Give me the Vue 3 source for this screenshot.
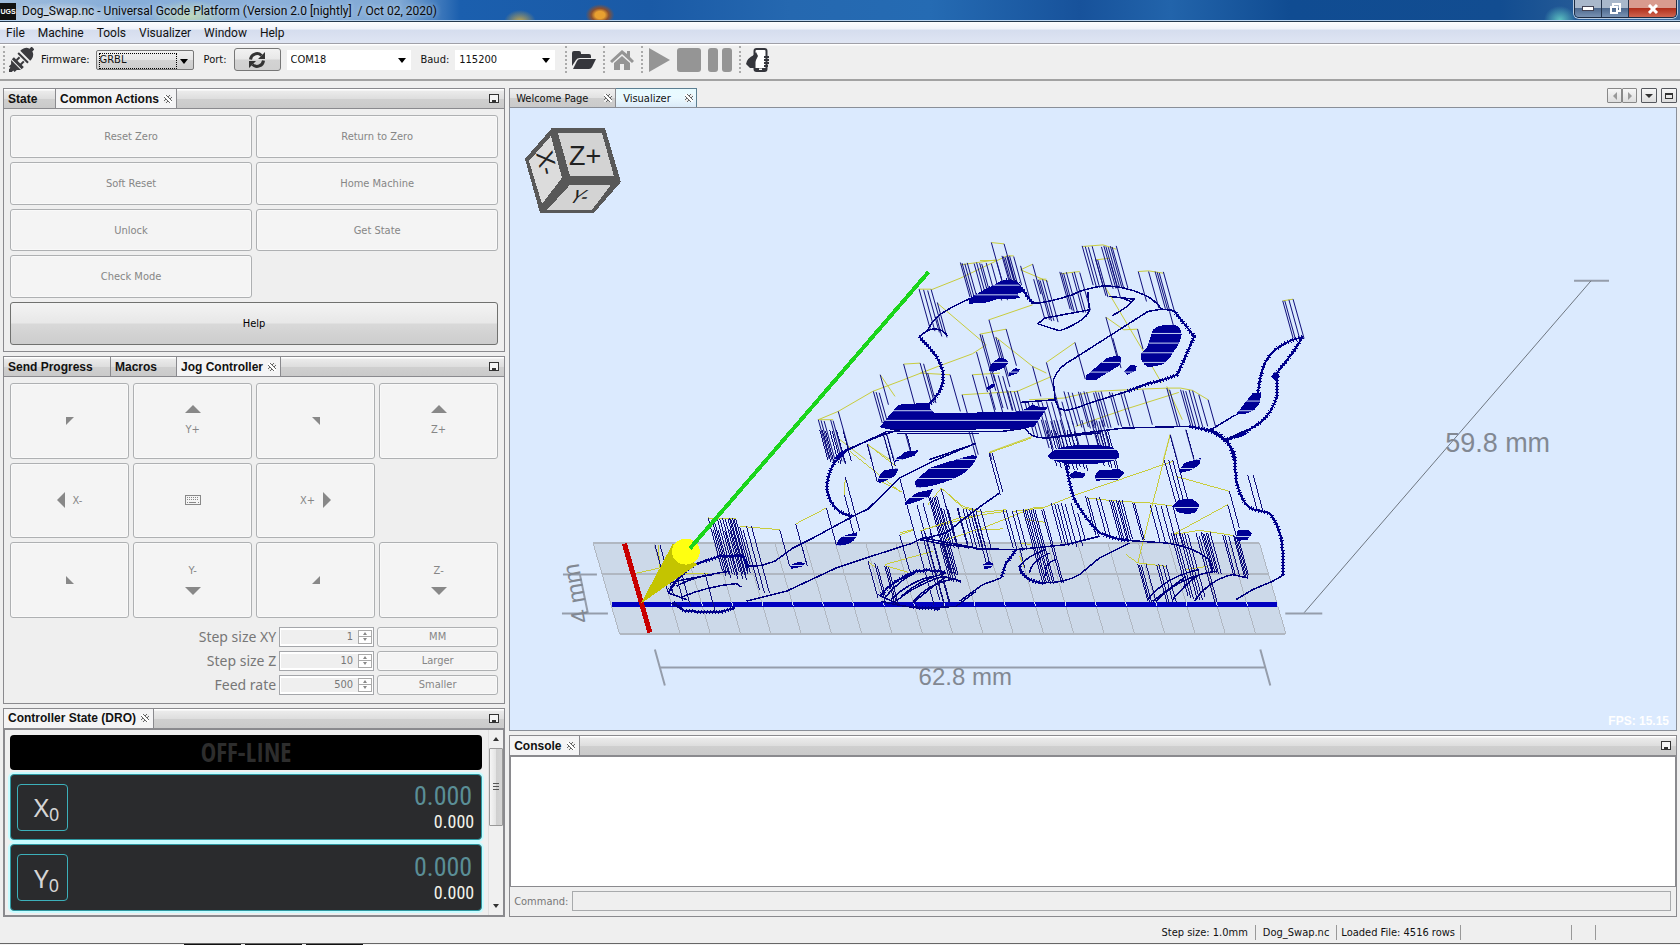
<script setup>
import { ref } from 'vue'

const menus = ['File', 'Machine', 'Tools', 'Visualizer', 'Window', 'Help']
const actions = ['Reset Zero', 'Return to Zero', 'Soft Reset', 'Home Machine', 'Unlock', 'Get State', 'Check Mode']
const axes = ['X', 'Y']
const rates = ref([
  { id: 'step-xy', label: 'Step size XY', value: '1', action: 'MM' },
  { id: 'step-z', label: 'Step size Z', value: '10', action: 'Larger' },
  { id: 'feed', label: 'Feed rate', value: '500', action: 'Smaller' },
])

const jog = [
  { name: 'Jog X- Y+', icon: 'M0 0H8L0 8Z', w: 8, h: 8 },
  { text: 'Y+', icon: 'M0 8L8 0L16 8Z', w: 16, h: 8, dir: 'col' },
  { name: 'Jog X+ Y+', icon: 'M0 0H8V8Z', w: 8, h: 8 },
  { text: 'Z+', icon: 'M0 8L8 0L16 8Z', w: 16, h: 8, dir: 'col' },
  { text: 'X-', icon: 'M8 0V16L0 8Z', w: 8, h: 16, dir: 'row' },
  { name: 'Keyboard jogging', keyboard: true },
  { text: 'X+', icon: 'M0 0V16L8 8Z', w: 8, h: 16, dir: 'row-rev' },
  null,
  { name: 'Jog X- Y-', icon: 'M0 0V8H8Z', w: 8, h: 8 },
  { text: 'Y-', icon: 'M0 0H16L8 8Z', w: 16, h: 8, dir: 'col-rev' },
  { name: 'Jog X+ Y-', icon: 'M8 0V8H0Z', w: 8, h: 8 },
  { text: 'Z-', icon: 'M0 0H16L8 8Z', w: 16, h: 8, dir: 'col-rev' },
]

const gridLines = Array.from({ length: 23 }, (_, i) => 593 + (i * 667) / 22)

// Gaps between the passes of the pocket infill
const passes = (first) => Array.from({ length: 26 }, (_, i) => `M0 ${first + i * 29}H1700`).join('')

// A plunge is a slanted stroke: [x, y, length]
const plunge = (list) => list.map(([x, y, l]) => `M${x} ${y}l${Math.round(l * 0.27)} ${l}`).join('')
const row = (xs, y, l) => xs.map((x, i) => [x, y + ((i * 7) % 5), l + ((i * 13) % 11)])

const toolpath = [
  {
    id: 'head',
    gaps: passes(22),
    transform: 'translate(780 220) scale(.34435 .33333)',
    outline:
      'M430 330Q450 290 480 275Q520 250 550 238M700 205L735 250L750 250Q790 245 850 225Q880 208 940 198Q1000 198 1060 225Q1090 240 1110 268L1145 272M1010 515L900 550Q860 568 830 572L810 565L800 540L795 480Q810 440 850 420L1070 275L1110 268M405 350L430 332Q465 318 488 348M750 312L770 295L900 270Q895 290 870 305Q840 325 812 333ZM895 215L900 270M958 230L1030 238Q1015 262 965 288M990 232L1020 245M310 636L200 690L160 720M310 636H640L715 625M340 642H580M435 720L560 675M700 548L800 540M1250 632L1325 585M715 628Q730 655 770 655L1000 625L1190 620',
    heavy:
      'M405 350L440 390Q480 440 475 480Q470 520 435 552M1145 272L1205 350L1155 465Q1120 480 1060 495L1010 515M1190 620L1250 632Q1310 650 1320 720M550 240L600 210L660 182L690 188L735 250M1520 352Q1440 370 1410 430Q1395 470 1390 520M1520 352L1490 400L1445 460L1445 530Q1430 580 1400 605Q1350 645 1300 660',
    fills: [
      'M550 236L600 208L640 185L665 180L690 188L712 215L690 222L700 235L660 238L640 236L600 248L550 252Z',
      'M290 622L345 555L440 548L435 565L450 580L600 578L700 575L735 555L755 562L780 560L740 620L700 628L500 630L310 628Z',
      'M1085 330Q1100 315 1125 316L1150 315Q1168 325 1168 345Q1160 380 1145 395Q1130 425 1110 435L1070 443Q1045 425 1050 400Q1068 390 1075 360Z',
      'M890 468L950 415L980 407L992 412L990 435L920 480L892 482Z',
      'M1000 455L1020 435L1038 438L1035 452L1010 466Z',
      'M608 452Q612 430 635 416Q658 412 665 430Q655 448 612 458Z',
      'M665 460L685 445L698 448L692 460L665 470Z',
      'M602 505L615 492L627 492L622 502L605 511Z',
      'M1325 585L1375 520L1400 518L1395 550L1380 570L1355 582Z',
      'M1428 470L1440 455L1454 470L1442 484Z',
      'M335 718L370 695L402 692L385 708L345 722Z',
      'M510 720L560 706L575 712L568 722Z',
      'M1325 650L1350 640L1360 642L1340 652Z',
    ],
    pegs: plunge([
      ...row([525, 530, 538, 545, 565, 572, 581, 587, 600, 615, 631], 128, 104),
      [615, 68, 115], [652, 72, 110],
      ...row([646, 650, 655, 660, 664, 668, 680], 108, 85),
      [700, 138, 100], [735, 133, 90], ...row([738, 752, 757, 764, 775], 178, 118),
      ...row([814, 819, 825, 833, 850, 856, 872], 156, 112),
      ...row([879, 888, 897, 908, 935, 942, 948, 955, 961, 966, 978], 78, 118),
      ...row([918, 924, 960], 118, 110), [1042, 155, 90], [1072, 155, 110], ...row([1091, 1097, 1103, 1115], 155, 112),
      ...row([405, 418, 430, 440], 208, 122), [458, 248, 105], [455, 290, 60], [1462, 243, 112], [1468, 243, 112], [1480, 240, 112], [1492, 238, 118],
      [608, 300, 125], [582, 343, 170], [588, 345, 140], [658, 328, 110], [572, 397, 120], [628, 352, 150], [635, 360, 110], [735, 440, 90],
      [858, 368, 110], [775, 428, 160], [948, 292, 130], [968, 355, 90], [1040, 328, 60], [1133, 275, 45], [292, 465, 90], ...row([272, 280, 289], 515, 95),
      [360, 433, 120], [408, 430, 125], [418, 432, 115], [430, 460, 90], [495, 465, 110], [560, 465, 115], [600, 470, 100], [530, 525, 55], [610, 520, 60], [632, 518, 60],
      ...row([622, 635, 648], 465, 100), ...row([662, 670, 682, 690], 512, 60), ...row([112, 120, 129, 148, 155], 600, 118), [170, 575, 115],
      ...row([826, 838, 850, 868, 874, 884, 892, 912, 918, 926, 934, 958, 966, 990, 1000], 515, 100),
      [1055, 510, 105], [1125, 505, 115], [1133, 510, 110], ...row([1165, 1172, 1180, 1190, 1200], 510, 110), [1218, 525, 95], [1245, 540, 85],
      ...row([712, 722, 734, 750, 762, 775, 790, 805, 820], 545, 100),
      ...row([760, 772, 788, 797, 806, 815, 836, 850, 878, 905, 912, 920, 928, 936], 600, 85),
      [300, 640, 80], [310, 640, 80], [365, 640, 60], [550, 635, 80], [558, 635, 70], [255, 675, 45], [1180, 630, 90], [1135, 645, 75], [610, 697, 23],
    ]),
    travel:
      'M440 210L525 175L660 108L680 108M525 135L630 120M582 122H630M615 68L652 72M405 208H440M458 250L600 375L560 402L460 440L360 480L270 515L170 575L112 600M582 343L658 328M608 300L735 255M700 150L735 133M700 150L780 185M752 178H775M814 162L872 155M879 80L940 75L978 88M918 120L960 115M1042 155L1072 153L1115 160M948 292L1000 330L1040 328M945 200L1060 400L1110 490M775 428L858 368M628 352L735 440L775 460M360 433L408 430M408 460L495 465M560 465L640 460M530 525L690 515M690 515L790 470M725 540L825 535L912 515L1055 508L1125 505L1165 505L1200 512L1245 540M860 620L1000 570L1160 518M1125 500L1170 600M610 697L735 650M1115 720L1135 645M1462 243L1492 238M112 600H155M255 675L320 720M292 465L335 530M175 660L250 720',
  },
  {
    id: 'front',
    gaps: passes(1),
    transform: 'translate(580 430) scale(.33333)',
    outline:
      'M800 60L910 15L960 0M820 260L865 238L960 145L1060 95L1190 40M500 410L545 408L585 395L640 355L700 325L820 260M500 515L620 485L770 415L900 372L1000 340L1030 325M290 470Q340 440 450 425M300 505Q380 470 470 462L485 473M265 490L320 510M275 520L315 545M270 460Q330 445 400 435M915 505Q960 450 1010 428M950 515Q1000 470 1090 440L1145 455M1000 520Q1060 470 1100 440M905 515Q960 530 1030 537L1130 530L1190 485M935 510Q990 455 1060 440M900 498L960 525M1030 325L1190 355M930 0H1190',
    heavy:
      'M800 60Q740 110 742 180Q755 250 820 260M265 490Q300 430 345 405L420 380L490 378L505 415M280 520L315 545L420 548L465 535M900 500Q940 450 1010 425Q1060 418 1100 430M1000 533L1080 538',
    fills: [
      'M630 408L655 397L677 400L665 412L635 418Z',
      'M770 345Q775 325 800 316L833 308Q835 325 812 340Q790 350 770 349Z',
      'M895 155Q895 135 915 122L955 115Q955 135 935 145L900 161Z',
      'M943 95L975 67L1015 64L1005 78L945 97Z',
      'M1005 155L1050 115L1110 95L1192 78Q1185 105 1160 125Q1130 150 1060 168L1010 176Z',
      'M975 218L1010 190L1060 178L1050 200L1015 215L978 226Z',
      'M762 88L782 66L798 62L790 80L765 92Z',
    ],
    pegs: plunge([
      ...row([385, 396, 402, 412, 420, 428, 436, 445, 449, 453, 458, 462, 468], 265, 160),
      ...row([400, 415, 435, 450, 460], 300, 140), [480, 292, 110], [500, 290, 200], [515, 290, 200], [490, 300, 180],
      [600, 300, 110], [648, 283, 125], [665, 345, 55], [740, 235, 115], [797, 143, 160], [794, 195, 60], [862, 42, 115], [805, 250, 70],
      ...row([720, 728, 737, 750, 757, 770, 790], 0, 92), [910, 10, 110], [920, 10, 100], [980, 10, 60],
      [865, 395, 110], [885, 400, 115], [893, 410, 100], ...row([915, 920, 926], 408, 105), [960, 315, 110], [225, 345, 140], [240, 345, 150], [290, 440, 75], [305, 430, 100], [375, 430, 115],
      [960, 145, 380], [1012, 225, 300], [1030, 220, 300], [1035, 305, 210],
      ...row([1047, 1052, 1057, 1062, 1067, 1072], 200, 225), [1085, 178, 160], [1100, 230, 110], ...row([1135, 1150, 1170], 235, 110),
    ]),
    travel:
      'M385 265L470 268M480 290L600 300M648 283L740 235M165 432L240 415L235 345M797 143L793 195M810 65L960 185M862 42L945 108M385 432H310M915 405L1060 365M865 395L885 412M960 315L1000 302M915 408L985 428M1045 225L1085 175L1150 230L1190 242M1030 300L1190 260M895 150L968 188',
  },
  {
    id: 'rear',
    gaps: passes(1),
    transform: 'translate(900 430) scale(.33333)',
    outline:
      'M440 25L600 10M230 358L350 360L500 345L600 320M60 330L140 310L190 270L250 225L300 190M305 445L250 465L180 515M690 340L600 385L540 435Q500 460 430 460M360 410Q380 380 440 360M390 430Q395 395 450 370M440 440Q430 400 470 390M770 515Q840 440 950 425M820 510Q860 460 900 435M885 515Q930 450 1000 435L1045 445M1155 435L1120 455L1060 480L1010 510M745 510Q800 440 900 420M5 500Q60 450 140 430M40 515Q90 460 165 448L185 458M990 25L1020 10L1045 0M760 515L860 440M60 330L140 345L250 358L350 360M690 333L800 340Q880 350 930 390L940 425',
    heavy:
      'M500 100Q510 170 525 210Q560 270 600 310Q650 330 690 333M350 360L320 400L305 445M430 460Q370 455 360 410M920 0Q980 20 1005 70L1010 150Q1030 240 1075 242L1110 250Q1150 300 1150 370L1152 435',
    fills: [
      'M445 82Q450 60 500 50Q560 40 630 50Q662 62 660 80Q650 100 560 104Q470 104 445 82Z',
      'M508 138L525 124L560 132L550 144L520 147Z',
      'M585 138L600 122L660 118L675 130L655 150L590 153Z',
      'M838 125L855 100L905 85L900 105L875 122L842 130Z',
      'M820 228L840 210L880 208L900 225L890 248L865 254L835 248Z',
      'M1010 325L1015 302L1045 300L1058 312L1045 330L1015 334Z',
      'M250 405L268 395L282 402L275 415L255 419Z',
      'M1005 20L1030 8L1040 12L1015 25Z',
    ],
    pegs: plunge([
      [268, 70, 125], [278, 70, 118], ...row([442, 455, 468, 480, 492, 502, 513, 524], 0, 110), ...row([585, 600, 608, 618, 625], 0, 108), [560, 105, 20],
      [812, 15, 195], [795, 92, 125], [808, 92, 125], [820, 92, 120], [860, 0, 88], [1045, 135, 105], [1062, 137, 105],
      [990, 185, 110], [985, 225, 95], ...row([125, 132, 145, 173, 200, 218, 227, 243], 235, 115), [220, 250, 160], [235, 270, 130],
      ...row([65, 75, 92], 305, 205), ...row([120, 126, 132, 140], 340, 110),
      ...row([310, 320, 338, 350], 240, 115), ...row([370, 376, 382, 388, 394, 400, 406, 427, 432], 238, 215), [360, 355, 60],
      ...row([455, 465, 475, 485, 497, 515], 220, 120), [535, 250, 80], ...row([558, 565, 590, 600], 200, 115),
      ...row([630, 636, 642, 650, 655, 660, 668], 210, 115), [700, 220, 112], [705, 220, 112], ...row([752, 768, 785, 800, 820], 225, 112),
      ...row([815, 822, 830, 840, 848, 855, 865], 310, 190), [890, 310, 210], ...row([905, 910, 915, 920, 925, 932], 308, 115),
      ...row([970, 976, 988, 1002, 1006, 1010, 1015], 315, 118), ...row([715, 720, 726, 740, 772, 778, 790, 800], 403, 110), [900, 320, 200],
    ]),
    travel:
      'M268 70L395 25M430 235L530 195L820 95M812 15L715 400L800 410M830 140L990 185M985 225L820 315L900 302L1005 318M560 205L660 215L750 220L825 230M125 175L190 235L250 248L320 240M230 300L310 298M60 305L180 265L320 245M140 330L250 295L400 235H430M340 245L430 235M860 420L925 410M360 340L395 345M360 380L375 415M380 270L435 278M0 310L40 300M715 400L680 375',
  },
]
</script>

<template>
  <div class="app">
    <header class="titlebar">
      <span class="logo">UGS</span>
      <h1 class="title">Dog_Swap.nc - Universal Gcode Platform (Version 2.0 [nightly]&nbsp; / Oct 02, 2020)</h1>
      <div class="win-controls">
        <button type="button" class="win" aria-label="Minimize">
          <svg width="12" height="6" viewBox="0 0 12 6"><rect x=".5" y=".5" width="11" height="4" fill="#fff" stroke="#445" /></svg>
        </button>
        <button type="button" class="win" aria-label="Restore">
          <svg width="12" height="12" viewBox="0 0 12 12" fill="none" stroke="#fff" stroke-width="2"><path d="M4 3V1H11V8H9" /><rect x="2" y="4" width="6" height="6" /></svg>
        </button>
        <button type="button" class="win close" aria-label="Close">
          <svg width="12" height="10" viewBox="0 0 12 10" stroke="#fff" stroke-width="3"><path d="M2 1L10 9M10 1L2 9" /></svg>
        </button>
      </div>
    </header>

    <nav class="menubar">
      <button v-for="m in menus" :key="m" type="button" class="menu">{{ m }}</button>
    </nav>

    <section class="toolbar" aria-label="Toolbar">
      <i class="grip"></i>
      <button type="button" class="tool plug" aria-label="Connect">
        <svg width="25" height="25" viewBox="0 0 25 25" fill="#3a3a3e">
          <g transform="rotate(-45 12 13)">
            <path d="M-5 11H-1V9H2L5 6V20L2 17H-1V15H-5ZM6 6H9V20H6ZM9 9H13V11H9ZM9 15H13V17H9Z" />
            <path d="M14 6H16V20H14ZM18 6H20Q25 7 26 11H29V15H26Q25 19 20 20H18Z" />
          </g>
        </svg>
      </button>
      <label for="firmware" class="lbl-firmware">Firmware:</label>
      <span class="select framed"><select id="firmware"><option>GRBL</option></select></span>
      <label for="port" class="lbl-port">Port:</label>
      <button type="button" class="refresh" aria-label="Refresh ports">
        <svg width="18" height="18" viewBox="0 0 18 18" fill="none" stroke="#333" stroke-width="3">
          <path d="M2.500 8.500A6.500 6.500 0 0 1 13.500 4.500M15.500 9.500A6.500 6.500 0 0 1 4.500 13.500" />
          <path d="M17 1V8H10ZM1 17V10H8Z" fill="#333" stroke="none" />
        </svg>
      </button>
      <span class="select port"><select id="port"><option>COM18</option></select></span>
      <label for="baud" class="lbl-baud">Baud:</label>
      <span class="select baud"><select id="baud"><option>115200</option></select></span>
      <i class="sep"></i>
      <button type="button" class="tool" aria-label="Open">
        <svg width="24" height="20" viewBox="0 0 24 20" fill="#35363c"><path d="M0 16V3Q0 1 2 1H7Q9 1 9 3V4H17Q19 4 19 6V8H8Q5 8 4 10Z" /><path d="M1 19L5 11Q6 9 8 9H24L20 17Q19 19 17 19Z" /></svg>
      </button>
      <i class="sep"></i>
      <button type="button" class="tool" aria-label="Home" disabled>
        <svg width="24" height="20" viewBox="0 0 24 20" fill="#959595"><path d="M12 0L17 4V1H20V7L24 11L22 13L12 4L2 13L0 11Z" /><path d="M12 6L20 13V20H14V14H10V20H4V13Z" /></svg>
      </button>
      <i class="sep"></i>
      <button type="button" class="tool" aria-label="Play" disabled>
        <svg width="22" height="24" viewBox="0 0 22 24" fill="#959595"><path d="M1 0L22 12L1 24Z" /></svg>
      </button>
      <button type="button" class="tool" aria-label="Stop" disabled>
        <svg width="24" height="24" viewBox="0 0 24 24" fill="#959595"><rect width="24" height="24" rx="3" /></svg>
      </button>
      <button type="button" class="tool" aria-label="Pause" disabled>
        <svg width="24" height="24" viewBox="0 0 24 24" fill="#959595"><rect width="10" height="24" rx="3" /><rect x="14" width="10" height="24" rx="3" /></svg>
      </button>
      <i class="sep"></i>
      <button type="button" class="tool" aria-label="Pendant">
        <svg width="24" height="24" viewBox="0 0 24 24"><path d="M9 3L8 7Q1 10 0 16L4 20H9V13L13 6V3Z" fill="#35363c" /><rect x="8.500" y="1" width="12" height="22" rx="2" fill="#fff" stroke="#35363c" stroke-width="2" /><path d="M7 16V8L10 4L12 8L9 14V20L5 20Z" fill="#35363c" /><path d="M9 20H20V23H9Z" fill="#35363c" /><rect x="13" y="20.500" width="3" height="1.500" fill="#fff" /><path d="M18 9H23M18 12H23M18 15H23M18 18H22" stroke="#35363c" stroke-width="2" /></svg>
      </button>
    </section>

    <main class="workspace">
      <div class="left">
        <section class="panel actions-panel">
          <div class="tabs">
            <button type="button" class="tab tab-state">State</button>
            <button type="button" class="tab active">Common Actions <i class="x"></i></button>
            <button type="button" class="minimize" aria-label="Minimize panel"></button>
          </div>
          <div class="actions">
            <button v-for="a in actions" :key="a" type="button" class="btn" disabled>{{ a }}</button>
            <button type="button" class="btn help">Help</button>
          </div>
        </section>

        <section class="panel jog-panel">
          <div class="tabs">
            <button type="button" class="tab tab-send">Send Progress</button>
            <button type="button" class="tab tab-macros">Macros</button>
            <button type="button" class="tab active">Jog Controller <i class="x"></i></button>
            <button type="button" class="minimize" aria-label="Minimize panel"></button>
          </div>
          <div class="jog">
            <template v-for="(j, i) in jog" :key="i">
              <span v-if="!j"></span>
              <button v-else type="button" class="btn" :class="j.dir" :aria-label="j.text || j.name" disabled>
                <svg v-if="j.keyboard" width="16" height="10" viewBox="0 0 16 10" fill="none" stroke="#888"><rect x=".5" y=".5" width="15" height="9" /><path d="M2 2.500H14M2 4.500H14" stroke-dasharray="1 1" /><path d="M2 7.500H3M4 7.500H11M13 7.500H14" /></svg>
                <svg v-else :width="j.w" :height="j.h" fill="#888"><path :d="j.icon" /></svg>
                <span v-if="j.text">{{ j.text }}</span>
              </button>
            </template>
          </div>
          <div class="rates">
            <template v-for="r in rates" :key="r.id">
              <label :for="r.id">{{ r.label }}</label>
              <span class="spinner">
                <input :id="r.id" v-model="r.value" type="text" inputmode="numeric" disabled />
                <span class="steps"><button type="button" class="up" aria-label="Increase" disabled></button><button type="button" class="down" aria-label="Decrease" disabled></button></span>
              </span>
              <button type="button" class="btn" disabled>{{ r.action }}</button>
            </template>
          </div>
        </section>

        <section class="panel dro-panel">
          <div class="tabs">
            <button type="button" class="tab active">Controller State (DRO) <i class="x"></i></button>
            <button type="button" class="minimize" aria-label="Minimize panel"></button>
          </div>
          <div class="dro">
            <div class="readouts">
              <div class="offline">OFF-LINE</div>
              <div v-for="a in axes" :key="a" class="axis">
                <button type="button" class="zero">{{ a }}<sub>0</sub></button>
                <div class="values"><span class="work">0.000</span><span class="machine">0.000</span></div>
              </div>
            </div>
            <div class="scroll"><i class="arrow-up"></i><i class="thumb"></i><i class="space"></i><i class="arrow-down"></i></div>
          </div>
        </section>
      </div>

      <div class="right">
        <section class="editor">
          <div class="editor-tabs">
            <button type="button" class="etab welcome">Welcome Page <i class="x"></i></button>
            <button type="button" class="etab visual">Visualizer <i class="x"></i></button>
            <span class="nav">
              <span class="pair"><button type="button" aria-label="Previous" disabled><i class="tri left-tri"></i></button><button type="button" aria-label="Next" disabled><i class="tri right-tri"></i></button></span>
              <button type="button" aria-label="List"><i class="tri down-tri"></i></button>
              <button type="button" aria-label="Maximize"><i class="maxi"></i></button>
            </span>
          </div>
          <div class="viewport">
            <svg class="scene" viewBox="510 108 1166 623" preserveAspectRatio="xMinYMin meet" shape-rendering="crispEdges">
              <defs>
                <clipPath v-for="t in toolpath" :id="`pocket-${t.id}`" :key="t.id"><path v-for="f in t.fills" :key="f" :d="f" /></clipPath>
              </defs>
              <path d="M593 543H1260L1286 634H620Z" fill="#ccd9e9" />
              <g stroke="#b0b7c1" fill="none">
                <path v-for="x in gridLines" :key="x" :d="`M${x} 543L${x + 26.500} 634`" />
                <path d="M593 543H1260M602 574H1269M620 634H1286" stroke-width="2" />
              </g>
              <path d="M612 604.500H1278" stroke="#0000c0" stroke-width="5" />
              <g stroke="#cfe0f8"><path v-for="x in gridLines.slice(2)" :key="x" :d="`M${x + 17.500} 602L${x + 18.500} 606`" /></g>
              <g v-for="t in toolpath" :key="t.id" :transform="t.transform" class="path">
                <path :d="t.travel" class="travel" />
                <path :d="t.pegs" class="peg" />
                <path :d="t.outline" class="outline" />
                <path :d="t.heavy" class="heavy" />
                <path :d="t.heavy" class="teeth" />
                <path v-for="f in t.fills" :key="f" :d="f" fill="#000096" />
                <g :clip-path="`url(#pocket-${t.id})`"><path :d="t.gaps" class="gaps" /></g>
              </g>
              <path d="M624.500 544L650 633" stroke="#c80000" stroke-width="5" />
              <path d="M641 604L673 544L697 565Z" fill="#c4c400" />
              <ellipse cx="686" cy="552" rx="14" ry="13" fill="#ff1" />
              <path d="M690 549L929 272" stroke="#1bd51b" stroke-width="4" />
              <g stroke="#959dab" stroke-width="2" shape-rendering="auto">
                <path d="M655 650L665 686M660 668H1265M1261 650L1271 686M563 575H597M562 614H608M580 575L588 614M1286 614H1323M1575 281H1610" />
                <path d="M1305 613L1592 281" stroke="#6d7580" stroke-width="1" />
              </g>
              <g class="dims">
                <text x="919" y="686">62.8 mm</text>
                <text x="1446" y="452" class="big">59.8 mm</text>
                <text transform="translate(589 622) rotate(-100)">4 mm</text>
              </g>
              <g>
                <path d="M552 128H605L621 182L594 213H540L525 159Z" fill="#585858" />
                <path d="M558 133H602L614 176H570Z" fill="#d3d3d3" />
                <path d="M551 136L562 178L542 204L529 161Z" fill="#dcdcdc" />
                <path d="M570 185H611L592 210H547Z" fill="#d3d3d3" />
              </g>
              <g class="cube">
                <text x="569" y="165" font-size="27">Z+</text>
                <text transform="translate(536 153) rotate(77)" font-size="24">X-</text>
                <text transform="translate(567 203) skewX(-35)" font-size="19">Y-</text>
              </g>
            </svg>
            <span class="fps">FPS: 15.15</span>
          </div>
        </section>

        <section class="panel console">
          <div class="tabs">
            <button type="button" class="tab active">Console <i class="x"></i></button>
            <button type="button" class="minimize" aria-label="Minimize panel"></button>
          </div>
          <textarea aria-label="Console output" readonly></textarea>
          <div class="command"><label for="command">Command:</label><input id="command" type="text" disabled /></div>
        </section>
      </div>
    </main>

    <footer class="status">
      <span class="cell step">Step size: 1.0mm</span>
      <span class="cell file">Dog_Swap.nc</span>
      <span class="cell rows">Loaded File: 4516 rows</span>
      <span class="cell wide"></span>
      <span class="cell small"></span>
    </footer>
    <div class="edge"><i></i><i></i><i></i></div>
  </div>
</template>

<style>
body { margin: 0; background: #efefef; }
</style>

<style scoped>
* { box-sizing: border-box; }
.app { display: flex; flex-direction: column; height: 100vh; min-height: 700px; overflow: hidden; background: #efefef; color: #111; font: 11px "DejaVu Sans Condensed", "DejaVu Sans", sans-serif; }
button, input, select, textarea { font: inherit; color: inherit; margin: 0; padding: 0; border-radius: 0; }
button { background: none; border: 0; }
i { display: block; font-style: normal; }

.titlebar { flex: none; display: flex; align-items: flex-start; height: 22px; border-bottom: 1px solid #24384e; box-shadow: inset 0 -1px #b9d3ee;
  background:
    radial-gradient(ellipse 16px 12px at 520px 22px, #c8a84a, transparent),
    radial-gradient(ellipse 16px 12px at 600px 15px, #e8a030 30%, #8a5030 55%, transparent 90%),
    radial-gradient(ellipse 16px 14px at 1560px 20px, #5cc0c0, transparent),
    radial-gradient(ellipse 40px 16px at 190px 16px, #bcd8b8, transparent),
    radial-gradient(ellipse 60px 16px at 60px 18px, #e0e4e8, transparent),
    linear-gradient(90deg, #9fbcdc 0, #86add8 120px, #8db1da 260px, #7fa8d4 400px, #1b5fae 460px, #1a5aa6 650px, #2568b0 790px, #256bb3 930px, #17529b 1080px, #2264ab 1170px, #104c92 1290px, #124d91 1500px, #3d6b9d 100%); }
.logo { width: 16px; height: 17px; margin-top: 3px; background: #111; color: #fff; font: bold 7px/17px "Liberation Sans", Arial, sans-serif; text-align: center; overflow: hidden; }
.title { flex: 1; margin: 0 0 0 6px; font: 12px/22px Roboto, "Open Sans", sans-serif; white-space: nowrap; color: #0a0a0a; text-shadow: 0 0 5px #d8e6f4; }
.win-controls { display: flex; height: 18px; margin-right: 3px; border: 1px solid #1d2c42; border-top: 0; border-radius: 0 0 5px 5px; overflow: hidden; box-shadow: 0 0 0 1px #b8cbe0; }
.win { width: 27px; display: grid; place-items: center; border-right: 1px solid #24344c; background: linear-gradient(#a9b8cb 0 45%, #4f6a8e 50%, #7892b3); }
.close { width: 47px; border: 0; background: linear-gradient(#d99b8e 0 45%, #b2301c 50%, #cf6550); }

.menubar { flex: none; display: flex; align-items: center; gap: 13px; height: 22px; padding-left: 6px; border-bottom: 1px solid #a0a0a8; background: linear-gradient(#fdfdfe 0, #f0f3fa 34%, #d5ddee 38%, #dfe5f3); font: 12px Roboto, "Open Sans", sans-serif; }
.menu { line-height: 18px; }

.toolbar { flex: none; display: flex; align-items: center; height: 37px; padding: 0 3px 4px; border-bottom: 2px solid #a2a2a2; background: linear-gradient(#fff 0 1px, #efefef 2px); }
.grip, .sep { flex: none; width: 2px; height: 27px; border-left: 2px dotted #aaa; }
.sep { margin: 0 5px 0 7px; }
.tool { display: grid; place-items: center; }
.tool + .tool { margin-left: 7px; }
.plug { margin-left: 4px; }
.lbl-firmware { margin: 0 6px 0 7px; }
.lbl-port { margin: 0 7px 0 10px; }
.lbl-baud { margin: 0 6px 0 10px; }
.select { position: relative; display: block; height: 20px; }
.select select { appearance: none; width: 100%; height: 100%; padding: 0 0 0 4px; border: 0; background: #fff; outline: 0; }
.select::after { content: ""; position: absolute; right: 5px; top: 8px; border: 4px solid transparent; border-top: 5px solid #000; border-bottom: 0; pointer-events: none; }
.framed { width: 98px; border: 1px solid #777; border-radius: 2px; background: linear-gradient(#f0f0f0, #e6e6e6 48%, #d3d3d3 52%, #cdcdcd); }
.framed::before { content: ""; position: absolute; left: 2px; top: 2px; width: 76px; height: 14px; border: 1px dotted #000; pointer-events: none; }
.framed select { background: none; padding-left: 3px; }
.port { width: 124px; }
.baud { width: 100px; margin-right: 3px; }
.refresh { display: grid; place-items: center; width: 47px; height: 23px; margin-right: 6px; border: 1px solid #777; border-radius: 3px; background: linear-gradient(#f2f2f2, #e8e8e8 48%, #d3d3d3 52%, #d0d0d0); }

.workspace { flex: 1; min-height: 0; display: grid; grid-template-columns: 43fr 100fr; gap: 4px; padding: 7px 3px 0; }
.left, .right { display: flex; flex-direction: column; gap: 4px; min-width: 0; min-height: 0; }
.panel { display: flex; flex-direction: column; min-height: 0; border: 1px solid #8a8a8e; background: #efefef; }
.actions-panel { flex: 264 1 0; }
.jog-panel { flex: 348 1 0; }
.dro-panel { flex: 209 1 0; }
.editor { flex: 645 1 0; display: flex; flex-direction: column; min-height: 0; }
.console { flex: 180 1 0; }

.tabs { flex: none; display: flex; height: 20px; border-bottom: 1px solid #8a8a8e; background: linear-gradient(#fff 0 1px, #ebebeb 2px, #dedede 50%, #cfcfcf 55%, #cacaca); font: bold 12px "Liberation Sans", Arial, sans-serif; }
.tab { display: flex; align-items: center; gap: 5px; padding: 0 4px; border-right: 1px solid #8a8a8e; white-space: nowrap; text-align: left; }
.tab.active { background: #f4f4f5; }
.tab-state { width: 52px; }
.tab-send { width: 107px; }
.tab-macros { width: 66px; }
.x { flex: none; width: 8px; height: 8px; background: linear-gradient(45deg, transparent 32%, #666 32% 43%, #fff 43% 57%, #666 57% 68%, transparent 68%), linear-gradient(-45deg, transparent 32%, #666 32% 43%, #eee 43% 57%, #666 57% 68%, transparent 68%); }
.minimize { align-self: center; width: 10px; height: 9px; margin: 0 5px 0 auto; border: 1px solid #333; background: linear-gradient(#333, #333) 50% 5px / 4px 2px no-repeat #f4f4f4; }

.btn { display: flex; align-items: center; justify-content: center; border: 1px solid #aeb0b2; border-radius: 3px; background: #f4f4f4; color: #868686; box-shadow: inset 0 0 0 1px #f9f9f9; }
.actions { flex: 1; display: grid; grid-template: repeat(5, 1fr) / 1fr 1fr; gap: 4px; padding: 6px; }
.help { grid-column: 1 / -1; grid-row: 5; color: #000; border-color: #70716f; box-shadow: none; background: linear-gradient(#f3f3f3, #e8e8e8 48%, #d8d8d8 52%, #cdcdcd); }
.jog { flex: 1; display: grid; grid-template: repeat(3, 1fr) / repeat(4, 1fr); gap: 4px; padding: 6px 6px 0; }
.col { flex-direction: column; gap: 10px; }
.col-rev { flex-direction: column-reverse; gap: 10px; }
.row { gap: 8px; }
.row-rev { flex-direction: row-reverse; gap: 8px; }
.rates { flex: none; display: grid; grid-template-columns: 1fr 95px 121px; gap: 4px 3px; align-items: stretch; padding: 9px 6px 8px; }
.rates label { align-self: center; text-align: right; font: 14px/20px "Noto Sans", "Open Sans", sans-serif; color: #777; }
.spinner { display: flex; height: 20px; padding: 2px 1px; border: 1px solid #a4a6aa; background: #fff; }
.spinner input { flex: 1; min-width: 0; border: 0; background: #efefef; text-align: right; padding-right: 5px; color: #777; }
.steps { display: flex; flex-direction: column; width: 14px; border: 1px solid #aaa; }
.steps button { flex: 1; display: grid; place-items: center; }
.steps .up { border-bottom: 1px solid #aaa; }
.steps button::before { content: ""; border: 2px solid transparent; }
.steps .up::before { border-bottom: 3px solid #888; border-top: 0; }
.steps .down::before { border-top: 3px solid #888; border-bottom: 0; }

.dro { flex: 1; min-height: 0; display: flex; border: 1px solid #8a8a8e; padding: 0; }
.readouts { flex: 1; display: flex; flex-direction: column; gap: 4px; padding: 5px 6px 4px 5px; }
.offline { flex: 36 1 0; display: grid; place-items: center; border-radius: 4px; background: #000; color: #2d2d2d; font: bold 26px/28px "Open Sans Condensed", "Liberation Sans Narrow", "Roboto Condensed", "DejaVu Sans Condensed", sans-serif; }
.axis { flex: 66 1 0; display: flex; align-items: center; justify-content: space-between; padding: 0 7px 0 6px; border: 1px solid #2f99a2; border-radius: 4px; background: #2a2b2d; box-shadow: 0 0 0 2px #c8fbff; }
.zero { width: 51px; height: 47px; padding-left: 8px; border: 1px solid #3cb0ba; border-radius: 4px; color: #d5d5d5; font: 26px/40px "Noto Sans", sans-serif; }
.zero sub { font-size: 18px; vertical-align: -4px; line-height: 0; }
.values { display: flex; flex-direction: column; align-items: flex-end; font-family: "Liberation Sans Narrow", "Roboto Condensed", "DejaVu Sans Condensed", sans-serif; }
.work { margin-right: 2px; font-size: 26px; line-height: 30px; color: #5a8e96; }
.machine { font-size: 18px; line-height: 22px; color: #f2f2ea; }
.scroll { display: flex; flex-direction: column; align-items: center; width: 15px; padding: 7px 0; border-left: 1px solid #e0e0e0; background: #f0f0f0; }
.thumb { width: 14px; flex: 77 1 0; margin-top: 7px; border: 1px solid #999; border-radius: 1px; background: repeating-linear-gradient(#555 0 1px, transparent 1px 3px) 50% 50% / 6px 8px no-repeat, linear-gradient(90deg, #f5f5f5, #e4e4e4 48%, #cfcfcf 52%, #d5d5d5); }
.space { flex: 78 1 0; }
.arrow-up, .arrow-down { border: 3px solid transparent; }
.arrow-up { border-top: 0; border-bottom: 4px solid #333; }
.arrow-down { border-bottom: 0; border-top: 4px solid #333; }

.editor-tabs { flex: none; display: flex; height: 19px; }
.etab { display: flex; align-items: center; justify-content: space-between; padding: 0 3px 0 6px; border: 1px solid #8a8a8e; border-bottom: 0; background: linear-gradient(#f0f0f0, #e2e2e2 48%, #cfcfcf 52%, #cacaca); }
.welcome { width: 107px; }
.visual { width: 81px; padding-left: 7px; border-color: #5d7f92; border-left: 0; background: linear-gradient(#e8fbff, #eaf9ff 48%, #dbeaf8); }
.nav { display: flex; gap: 4px; margin-left: auto; height: 15px; }
.pair { display: flex; }
.nav button { width: 16px; height: 15px; display: grid; place-items: center; border: 1px solid #55585e; border-radius: 1px; background: linear-gradient(#f6f6f6, #dedede); }
.pair button { width: 15px; border-color: #888; }
.tri { border: 4px solid transparent; }
.left-tri { border-right: 4px solid #999; border-left: 0; }
.right-tri { border-left: 4px solid #999; border-right: 0; }
.down-tri { border-top: 4px solid #333; border-bottom: 0; }
.maxi { width: 8px; height: 6px; border: 1px solid #333; border-top-width: 2px; }

.viewport { position: relative; flex: 1; min-height: 0; border: 1px solid #8a8f98; background: #dbeafe; overflow: hidden; }
.scene { display: block; width: 100%; height: 100%; }
.scene text { font-family: "Liberation Sans", Arial, sans-serif; }
.path path { vector-effect: non-scaling-stroke; }
.travel, .peg, .outline, .heavy, .teeth, .gaps { fill: none; }
.gaps { stroke: #c6d4f4; stroke-width: 1; }
.travel { stroke: #c8cc3c; stroke-width: 1; }
.peg { stroke: #10107c; stroke-width: 1; }
.outline { stroke: #000080; stroke-width: 1.5; }
.heavy { stroke: #00008b; stroke-width: 2; }
.teeth { stroke: #00008b; stroke-width: 4; stroke-dasharray: 1 2; }
.dims { fill: #828892; font-size: 24px; }
.dims .big { font-size: 27px; }
.cube { fill: #222; }
.fps { position: absolute; right: 7px; bottom: 2px; color: #fff; font: bold 12px/14px "Liberation Sans", Arial, sans-serif; }

.console textarea { flex: 1; min-height: 0; resize: none; border: 1px solid #8a8a8e; background: #fff; outline: 0; }
.command { flex: none; display: flex; align-items: center; gap: 4px; padding: 4px 5px 5px 4px; color: #777; }
.command input { flex: 1; height: 20px; border: 1px solid #a8aaac; background: #efefef; }

.status { flex: none; display: flex; justify-content: flex-end; align-items: center; height: 26px; padding: 4px 84px 0 0; }
.cell { height: 15px; line-height: 15px; border-right: 1px solid #999; white-space: nowrap; }
.step { padding-right: 7px; }
.file { padding: 0 7px; }
.rows { padding: 0 5px 0 4px; }
.wide { width: 111px; }
.small { width: 24px; }
.edge { flex: none; display: flex; gap: 4px; height: 2px; padding-left: 184px; border-top: 1px solid #666; background: #f4f4f4; }
.edge i { width: 57px; background: #111; }
</style>
